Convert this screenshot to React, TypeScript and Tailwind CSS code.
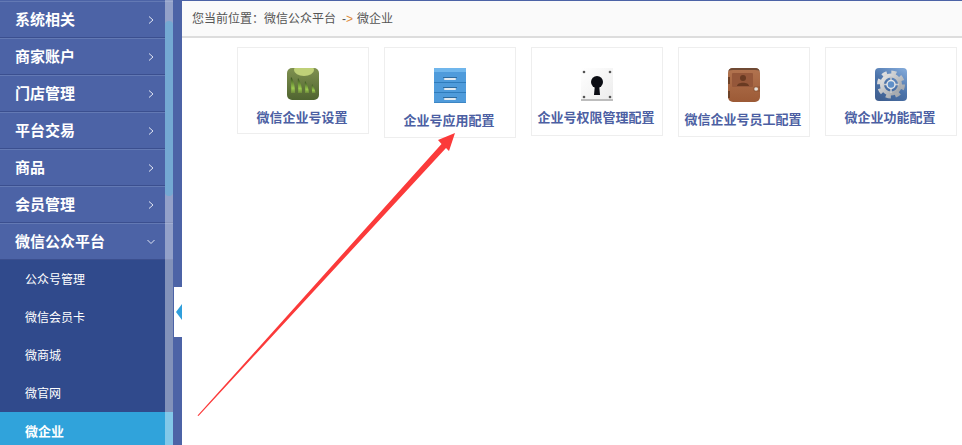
import type { ReactNode } from 'react';

const font = "font-['Liberation_Sans','Noto_Sans_CJK_SC',sans-serif]";

const topMenus = ['系统相关', '商家账户', '门店管理', '平台交易', '商品', '会员管理'];
const subMenus = ['公众号管理', '微信会员卡', '微商城', '微官网'];

function GridIcon() {
  return (
    <svg width="32" height="32" viewBox="0 0 32 32">
      <defs>
        <linearGradient id="g1" x1="0" y1="0" x2="0" y2="1">
          <stop offset="0" stopColor="#7f9150" />
          <stop offset="1" stopColor="#4f6430" />
        </linearGradient>
        <linearGradient id="g1b" x1="0" y1="0" x2="0" y2="1">
          <stop offset="0" stopColor="#344c1e" />
          <stop offset="0.7" stopColor="#9ccb4e" />
          <stop offset="1" stopColor="#6d8a3a" />
        </linearGradient>
      </defs>
      <rect width="32" height="32" rx="5" fill="url(#g1)" />
      <ellipse cx="17" cy="2" rx="10" ry="6" fill="#bfd078" />
      <path d="M4 25 C5 19 3 13 4 9 C7 12 8 19 8 25Z" fill="url(#g1b)" />
      <path d="M11 25 C12 20 10 14 11 10 C14 14 15 20 15 25Z" fill="url(#g1b)" />
      <path d="M18 25 C19 21 17 17 18 13 C20.5 16 21.5 21 22 25Z" fill="url(#g1b)" />
      <path d="M25 25 C25.5 22 24 19 25 16 C27 19 28 22 28.5 25Z" fill="url(#g1b)" />
    </svg>
  );
}

function CabinetIcon() {
  return (
    <svg width="32" height="35" viewBox="0 0 32 35">
      <rect width="32" height="35" fill="#4f9bdb" />
      <rect width="32" height="4" fill="#70b6ec" />
      <rect y="14" width="32" height="1" fill="#2f7cbc" />
      <rect y="24" width="32" height="1" fill="#2f7cbc" />
      <rect y="34" width="32" height="1" fill="#3d86c4" />
      <rect x="9" y="9" width="14" height="1" fill="#2f6b9f" />
      <rect x="9" y="19" width="14" height="1" fill="#2f6b9f" />
      <rect x="9" y="29" width="14" height="1" fill="#2f6b9f" />
      <rect x="10" y="10" width="12" height="2" rx="1" fill="#e3e9ee" />
      <rect x="10" y="20" width="12" height="2" rx="1" fill="#e3e9ee" />
      <rect x="10" y="30" width="12" height="2" rx="1" fill="#e3e9ee" />
    </svg>
  );
}

function KeyholeIcon() {
  return (
    <svg width="32" height="33" viewBox="0 0 32 33">
      <defs>
        <linearGradient id="g3" x1="0" y1="0" x2="1" y2="1">
          <stop offset="0" stopColor="#ffffff" />
          <stop offset="1" stopColor="#ececec" />
        </linearGradient>
      </defs>
      <rect width="32" height="33" fill="url(#g3)" />
      <rect y="31" width="32" height="2" fill="#bdbdbd" />
      <circle cx="3" cy="4" r="1.3" fill="#555" />
      <circle cx="29" cy="4" r="1.3" fill="#555" />
      <circle cx="3" cy="29" r="1.3" fill="#555" />
      <circle cx="29" cy="29" r="1.3" fill="#555" />
      <circle cx="16" cy="14" r="6" fill="#0b0d14" />
      <path d="M14 16 H18 L19 27 H13Z" fill="#0b0d14" />
    </svg>
  );
}

function BookIcon() {
  return (
    <svg width="32" height="34" viewBox="0 0 32 34">
      <defs>
        <linearGradient id="g4" x1="0" y1="0" x2="0" y2="1">
          <stop offset="0" stopColor="#b27450" />
          <stop offset="1" stopColor="#9c5a36" />
        </linearGradient>
      </defs>
      <rect width="32" height="34" rx="5" fill="url(#g4)" />
      <path d="M0 5 Q0 0 5 0 H27 Q32 0 32 5 V3 Q30 2 27 2 H5 Q2 2 0 3Z" fill="#6f4a34" />
      <rect x="4" y="5" width="21" height="14" rx="1" fill="#95573a" />
      <circle cx="15" cy="10" r="3" fill="#693a22" />
      <path d="M9 18 C9 13.5 21 13.5 21 18Z" fill="#693a22" />
      <rect y="9" width="2" height="7" fill="#6e4228" />
      <rect y="23" width="2" height="7" fill="#6e4228" />
      <circle cx="28" cy="21" r="2" fill="#e8e2da" />
      <path d="M26 19 H32 V23 H26Z" fill="none" stroke="#7a4a2e" strokeWidth="0.5" />
    </svg>
  );
}

function GearIcon() {
  return (
    <svg width="32" height="33" viewBox="0 0 32 33">
      <defs>
        <linearGradient id="g5" x1="0.8" y1="0" x2="0.2" y2="1">
          <stop offset="0" stopColor="#7fa6d6" />
          <stop offset="0.5" stopColor="#4c74ab" />
          <stop offset="1" stopColor="#3f5f90" />
        </linearGradient>
        <linearGradient id="g5b" x1="0" y1="0" x2="1" y2="1">
          <stop offset="0" stopColor="#e6e6e6" />
          <stop offset="1" stopColor="#9a9fa5" />
        </linearGradient>
      </defs>
      <rect width="32" height="33" rx="4" fill="url(#g5)" />
      <circle cx="16" cy="16.5" r="9" fill="none" stroke="url(#g5b)" strokeWidth="4" />
      <circle cx="16" cy="16.5" r="12" fill="none" stroke="url(#g5b)" strokeWidth="4" strokeDasharray="5 4.42" />
      <path d="M16 8 V25 M8 16.5 H24" stroke="#c9cbce" strokeWidth="1.5" />
      <circle cx="16" cy="16.5" r="4" fill="#5f8fc8" stroke="#e4e6e8" strokeWidth="1.5" />
    </svg>
  );
}

function Chevron({ down }: { down?: boolean }) {
  return (
    <svg width="8" height="10" viewBox="0 0 8 10" className="mr-[18px]">
      {down ? (
        <path d="M0.5 3 L4 6.5 L7.5 3" fill="none" stroke="#dfe4f2" strokeWidth="1" />
      ) : (
        <path d="M2 1.5 L6 5 L2 8.5" fill="none" stroke="#dfe4f2" strokeWidth="1" />
      )}
    </svg>
  );
}

function MenuRow({ label, down }: { label: string; down?: boolean }) {
  return (
    <div className="flex h-[37px] items-center justify-between border-t border-b border-t-[#6379b4] border-b-[#3b4f8f] bg-[#4c63a6] pl-[15px]">
      <span className="mt-[2px] text-[15px] font-bold text-white">{label}</span>
      <Chevron down={down} />
    </div>
  );
}

function Card({ icon, label, height, gap }: { icon: ReactNode; label: string; height: string; gap: string }) {
  return (
    <div className={`flex w-[132px] flex-col items-center border border-[#eeeeee] pt-5 ${height}`}>
      {icon}
      <span className={`whitespace-nowrap pr-[2px] text-[13px] font-bold leading-[16px] text-[#4c5fa3] ${gap}`}>{label}</span>
    </div>
  );
}

export default function App() {
  return (
    <div className={`relative flex h-[445px] w-[962px] overflow-hidden bg-white ${font}`}>
      <aside className="relative h-full w-[182px] shrink-0 bg-[#4c63a6]">
        <div className="-mt-px w-[173px]">
          <div className="h-[2px]" />
          {topMenus.map(label => (
            <MenuRow key={label} label={label} />
          ))}
          <MenuRow label="微信公众平台" down />
          <div className="bg-[#304a8c]">
            {subMenus.map(label => (
              <div key={label} className="flex h-[38px] items-center pl-[25px] pt-[2px] text-xs text-white">
                {label}
              </div>
            ))}
          </div>
          <div className="flex h-[38px] items-center bg-[#30a3db] pl-[25px] pt-[2px] text-[13px] font-bold text-white">微企业</div>
        </div>

        {/* scrollbar over the menu */}
        <div className="absolute bottom-0 left-[165px] top-0 w-2 bg-white/40" />
        <div className="absolute left-[165px] top-[21px] h-[175px] w-2 rounded bg-[#74a9d3]" />

        {/* collapse handle */}
        <div className="absolute left-[174px] top-[287px] flex h-[50px] w-2 items-center justify-end bg-white">
          <div className="h-0 w-0 border-y-[8px] border-r-[6px] border-y-transparent border-r-[#2f9fdc]" />
        </div>
      </aside>

      <main className="min-w-0 flex-1">
        <div className="flex h-[38px] items-center border-t border-b-2 border-t-[#4c63a6] border-b-[#dddddd] bg-[#fafafa] pl-2.5 text-xs text-[#555555]">
          <span>您当前位置{'\uFF1A'}微信公众平台</span>
          <span className="ml-1.5 text-[#555555]">-</span>
          <span className="text-[#e08a3a]">&gt;</span>
          <span className="ml-1">微企业</span>
        </div>
        <div className="flex items-start gap-[15px] pl-[55px] pt-[9px]">
          <Card icon={<GridIcon />} label="微信企业号设置" height="h-[87px]" gap="mt-2.5" />
          <Card icon={<CabinetIcon />} label="企业号应用配置" height="h-[91px]" gap="mt-2.5" />
          <Card icon={<KeyholeIcon />} label="企业号权限管理配置" height="h-[89px]" gap="mt-[9px]" />
          <Card icon={<BookIcon />} label="微信企业号员工配置" height="h-[90px]" gap="mt-2.5" />
          <Card icon={<GearIcon />} label="微企业功能配置" height="h-[89px]" gap="mt-[9px]" />
        </div>
      </main>

      {/* annotation arrow drawn on top of the screenshot */}
      <svg className="pointer-events-none absolute left-0 top-0" width="962" height="445" viewBox="0 0 962 445">
        <path d="M197.5 415.5 L441.5 144 L438 140 L455 133 L449 151 L446 148 L198.5 416Z" fill="#fb3a3a" />
      </svg>
    </div>
  );
}
